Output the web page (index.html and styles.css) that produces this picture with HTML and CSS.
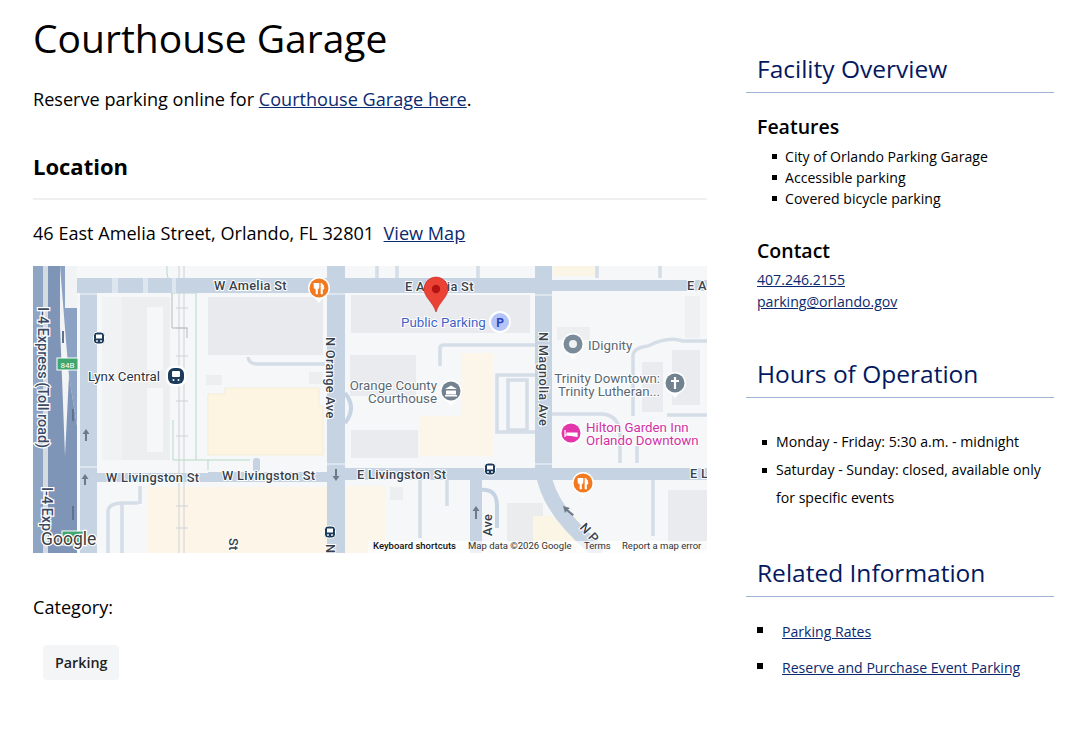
FILE: index.html
```html
<!doctype html>
<html>
<head>
<meta charset="utf-8">
<title>Courthouse Garage</title>
<link rel="stylesheet" href="styles.css">
</head>
<body>
<div class="page">
	<div class="main">
		<h1>Courthouse Garage</h1>
		<p class="intro">Reserve parking online for <a href="#">Courthouse Garage here</a>.</p>
		<h2 class="loc-title">Location</h2>
		<p class="address">46 East Amelia Street, Orlando, FL 32801 &nbsp;<a href="#">View Map</a></p>

		<svg class="map" width="674" height="287" viewBox="0 0 674 287">
			<defs>
				<g id="tip"><path d="M-6 8 L0 15 L6 8 Z" fill="#fff"/></g>
				<g id="transit">
					<rect x="-5.500" y="-6" width="11" height="12" rx="3.500" fill="#1d3c5c" stroke="#fff" stroke-width="1"/>
					<rect x="-3" y="-3.500" width="6" height="4" fill="#fff"/>
					<circle cx="-2" cy="3" r="0.900" fill="#fff"/>
					<circle cx="2" cy="3" r="0.900" fill="#fff"/>
				</g>
				<g id="food">
					<use href="#tip"/>
					<circle r="11" fill="#fff"/>
					<circle r="9.500" fill="#f1791f"/>
					<path d="M-5 -5 V-1 Q-5 1 -3 1 V6 H-1.500 V1 Q0 1 0 -1 V-5 M-2.500 -5 V-1 M2 -5 Q5 -4 5 1 H3.500 V6 H2 Z" fill="#fff" stroke="#fff" stroke-width="0.700"/>
				</g>
			</defs>

			<rect width="674" height="287" fill="#f6f7f8"/>

			<!-- blocks -->
			<rect x="69" y="31" width="68" height="163" fill="#eceef0"/>
			<rect x="69" y="31" width="20" height="163" fill="#f1f2f4"/>
			<rect x="114" y="41" width="16" height="63" fill="#f6f7f8"/>
			<rect x="114" y="122" width="16" height="64" fill="#f6f7f8"/>
			<rect x="175" y="31" width="115" height="58" fill="#e8eaed"/>
			<rect x="173" y="109" width="16" height="10" fill="#eceef0"/>
			<rect x="276" y="106" width="14" height="12" fill="#eceef0"/>
			<path d="M175 128 H192 V122 H286 V140 H290 V189 H175 Z" fill="#fdf5e2" stroke="#eee5cf" stroke-width="0.600"/>
			<rect x="114" y="221" width="180" height="66" fill="#fdf6e8"/>
			<rect x="312" y="220" width="40" height="67" fill="#fcf6ea"/>
			<rect x="318" y="29" width="179" height="38" fill="#e8eaed"/>
			<rect x="317" y="89" width="66" height="41" fill="#e9ebee"/>
			<rect x="318" y="164" width="67" height="28" fill="#e9ebee"/>
			<path d="M428 87 H460 V190 H387 V150 H428 Z" fill="#fbf6e9"/>
			<rect x="524" y="61" width="33" height="13" fill="#eceef0"/>
			<rect x="609" y="96" width="21" height="50" fill="#e9ebee"/>
			<rect x="639" y="84" width="28" height="55" fill="#e9ebee"/>
			<rect x="652" y="30" width="15" height="42" fill="#eff0f2"/>
			<rect x="635" y="224" width="39" height="60" fill="#e9ebee"/>
			<rect x="357" y="221" width="13" height="13" fill="#eceef0"/>
			<rect x="474" y="237" width="36" height="47" fill="#eaecee"/>
			<rect x="500" y="250" width="44" height="37" fill="#fbf5e6"/>
			<rect x="520" y="0" width="44" height="10" fill="#fbf5e6"/>

			<!-- minor roads -->
			<g fill="none" stroke="#d5dde7" stroke-width="3.500">
				<path d="M215 91 Q216 98 224 98 H292"/>
				<path d="M407 100 V82 Q407 79 411 79 H502"/>
				<path d="M502 109 H464 V166 H502"/>
				<path d="M475 114 H494 V164 H475 Z"/>
				<path d="M519 148 H570 Q587 150 587 170 V197"/>
				<path d="M604 180 V197 M634 149 H674 M620 214 V270"/>
				<path d="M600 150 V90 Q600 82 615 80 Q635 70 650 75 H674"/>
				<path d="M75 287 V245 Q76 237 90 237 H105 M89 237 V287 M107 220 V238"/>
				<path d="M387 214 V272 M414 214 V240"/>
				<path d="M344 12 V0 M364 12 V0 M445 12 V0 M564 12 V0 M627 12 V0"/>
			</g>

			<!-- rail and green path -->
			<g fill="none" stroke="#cdd2d8" stroke-width="1">
				<path d="M146 0 V287 M151 0 V287"/>
				<path d="M143 42 H155 M143 62 H155 M143 90 H155 M143 135 H155 M143 170 H155 M143 240 H155 M143 262 H155"/>
			</g>
			<g fill="none" stroke="#b5d9c8" stroke-width="1">
				<path d="M134 0 V8 L139 27 H163 V194 H217 M140 154 V194 H163 M175 194 V204"/>
			</g>
			<path d="M139 27 V62 H154 V72" fill="none" stroke="#b3bdb9" stroke-width="1"/>

			<!-- main roads -->
			<g fill="#c6d3e3">
				<rect x="32" y="12" width="487" height="15"/>
				<rect x="519" y="14" width="155" height="11"/>
				<rect x="294" y="0" width="18" height="287"/>
				<rect x="502" y="0" width="17" height="205"/>
				<rect x="47" y="12" width="17" height="275"/>
				<rect x="47" y="207" width="253" height="9"/>
				<rect x="175" y="206" width="125" height="8"/>
				<rect x="300" y="202" width="374" height="12"/>
				<rect x="220" y="192" width="7" height="14" rx="3"/>
				<path d="M312 127 Q324 142 312 157" fill="none" stroke="#c6d3e3" stroke-width="4"/>
				<path d="M510 205 Q515 245 568 287" fill="none" stroke="#c6d3e3" stroke-width="15"/>
				<rect x="437" y="214" width="12" height="73"/>
				<path d="M447 224 Q464 222 464 240 V262" fill="none" stroke="#c6d3e3" stroke-width="4"/>
			</g>
			<g fill="#dde5ee">
				<rect x="47" y="27" width="17" height="2"/>
				<rect x="294" y="27" width="18" height="2"/>
				<rect x="502" y="28" width="17" height="2"/>
				<rect x="294" y="197" width="18" height="2"/>
				<rect x="502" y="197" width="17" height="2"/>
				<rect x="47" y="200" width="17" height="2"/>
				<rect x="110" y="12" width="5" height="15"/>
				<rect x="79" y="12" width="6" height="15"/>
				<rect x="139" y="12" width="4" height="15"/>
			</g>

			<!-- highway -->
			<rect x="0" y="0" width="44" height="287" fill="#f1f3f5"/>
			<rect x="0" y="0" width="10" height="287" fill="#8fa5c4"/>
			<rect x="10" y="0" width="5" height="287" fill="#d6dbe1"/>
			<path d="M15 0 H27 V60 L32 190 V287 H15 Z" fill="#7e95b8"/>
			<path d="M27 0 H32 V42 H44 V160 L36 110 L33 75 Z" fill="#8ca2c4"/>
			<path d="M36 110 L44 160 V287 H32 V190 Z" fill="#7e95b8"/>
			<path d="M30 65 v12 M40 143 v12 M40 240 v14" stroke="#5e7391" stroke-width="2"/>

			<!-- shields -->
			<rect x="24" y="92" width="21" height="12" fill="#3fa66e" stroke="#fff" stroke-width="1"/>
			<text class="shield" x="34.500" y="101.500">84B</text>
			<rect x="29" y="265" width="22" height="14" fill="#3fa66e" stroke="#fff" stroke-width="1"/>

			<!-- direction arrows -->
			<g fill="#6d7a88">
				<path d="M53 163 l-3.500 5 h2.500 v7 h2 v-7 h2.500 z"/>
				<path d="M52 208 l-3.500 5 h2.500 v6 h2 v-6 h2.500 z"/>
				<path d="M303 215 l3.500 -5 h-2.500 v-7 h-2 v7 h-2.500 z"/>
				<path d="M447 240 l-3.500 5 h2.500 v8 h2 v-8 h2.500 z" transform="translate(-4 0)"/>
				<path d="M530 240 l2 7 l1.500 -2 l6 5 l1.500 -1.500 l-6 -5 l2 -1.500 z"/>
			</g>

			<!-- transit stops -->
			<use href="#transit" x="66" y="72"/>
			<use href="#transit" x="297" y="266"/>
			<use href="#transit" x="457" y="203"/>
			<rect x="133" y="100" width="20" height="20" rx="7" fill="#fff"/>
			<rect x="135" y="102" width="16" height="16" rx="6" fill="#1d3c5c"/>
			<rect x="139" y="105" width="8" height="6" rx="1" fill="#fff"/>
			<circle cx="140.500" cy="114" r="1" fill="#fff"/>
			<circle cx="145.500" cy="114" r="1" fill="#fff"/>

			<!-- place pins -->
			<use href="#food" x="286" y="22"/>
			<use href="#food" x="550" y="217"/>

			<circle cx="467" cy="56" r="11" fill="#fff"/>
			<circle cx="467" cy="56" r="9" fill="#b6c5f8"/>
			<text class="pin-p" x="467" y="60.500">P</text>

			<use href="#tip" x="540" y="78"/>
			<circle cx="540" cy="78" r="11" fill="#fff"/>
			<circle cx="540" cy="78" r="9.500" fill="#7b8b99"/>
			<circle cx="540" cy="78" r="4" fill="#eef1f3"/>

			<use href="#tip" x="642" y="117"/>
			<circle cx="642" cy="117" r="11" fill="#fff"/>
			<circle cx="642" cy="117" r="9.500" fill="#72838f"/>
			<path d="M642 111 v12 M638 115 h8" stroke="#fff" stroke-width="2.200"/>

			<use href="#tip" x="418" y="125"/>
			<circle cx="418" cy="125" r="11" fill="#fff"/>
			<circle cx="418" cy="125" r="9.500" fill="#72838f"/>
			<path d="M412 123 L418 119.500 L424 123 Z M413 124.500 h10 v4 h-10 z M412 129 h12 v1.500 h-12 z" fill="#fff"/>

			<use href="#tip" x="538" y="167"/>
			<circle cx="538" cy="167" r="11" fill="#fff"/>
			<circle cx="538" cy="167" r="9.500" fill="#e535ab"/>
			<path d="M532 164 v7 M532 169 h12 v2 M534 167 h10 v2 h-10 z" stroke="#fff" stroke-width="1.200" fill="#fff"/>

			<!-- labels -->
			<text class="street" x="181" y="24">W Amelia St</text>
			<text class="street" x="372" y="25">E Amelia St</text>
			<text class="street" x="654" y="24">E A</text>
			<text class="street" x="73" y="216">W Livingston St</text>
			<text class="street" x="189" y="214">W Livingston St</text>
			<text class="street" x="324" y="213">E Livingston St</text>
			<text class="street" x="657" y="212">E L</text>
			<text class="street" transform="translate(293 71) rotate(90)">N Orange Ave</text>
			<text class="street" transform="translate(506 66) rotate(90)">N Magnolia Ave</text>
			<text class="highway" transform="translate(5 41) rotate(90)">I-4 Express (Toll road)</text>
			<text class="highway" transform="translate(9 221) rotate(90)">I-4 Exp</text>
			<text class="street" transform="translate(196 272) rotate(90)">St</text>
			<text class="street" transform="translate(293 278) rotate(90)">N</text>
			<text class="street" transform="translate(459 270) rotate(-90)">Ave</text>
			<text class="street" transform="translate(546 262) rotate(48)">N P</text>

			<text class="poi poi-blue" x="368" y="61">Public Parking</text>
			<text class="poi poi-grey" x="555" y="84">IDignity</text>
			<text class="poi poi-grey poi-end" x="627" y="117">Trinity Downtown:</text>
			<text class="poi poi-grey poi-end" x="627" y="130">Trinity Lutheran...</text>
			<text class="poi poi-grey poi-end" x="404" y="124">Orange County</text>
			<text class="poi poi-grey poi-end" x="404" y="137">Courthouse</text>
			<text class="poi poi-pink" x="553" y="166">Hilton Garden Inn</text>
			<text class="poi poi-pink" x="553" y="179">Orlando Downtown</text>
			<text class="poi poi-dark" x="55" y="115">Lynx Central</text>

			<!-- main marker -->
			<path d="M403 46 C400 36 391 31 391 23 A12 12 0 0 1 415 23 C415 31 406 36 403 46 Z" fill="#ea4335" stroke="#c5221f" stroke-width="0.600"/>
			<circle cx="403" cy="23" r="4.200" fill="#b31412"/>

			<!-- footer of the map -->
			<text class="g-logo" x="8" y="279">Google</text>
			<rect x="335" y="275" width="339" height="12" fill="#fff" opacity="0.700"/>
			<text class="attr attr-bold" x="340" y="283">Keyboard shortcuts</text>
			<text class="attr" x="435" y="283">Map data ©2026 Google</text>
			<text class="attr" x="551" y="283">Terms</text>
			<text class="attr" x="589" y="283">Report a map error</text>
		</svg>

		<p class="cat-label">Category:</p>
		<a class="tag" href="#">Parking</a>
	</div>

	<div class="side">
		<h2 class="side-title">Facility Overview</h2>
		<h3 class="first">Features</h3>
		<ul class="features">
			<li>City of Orlando Parking Garage</li>
			<li>Accessible parking</li>
			<li>Covered bicycle parking</li>
		</ul>
		<h3 class="contact-title">Contact</h3>
		<div class="contact">
			<a href="#">407.246.2155</a><br>
			<a href="#">parking@orlando.gov</a>
		</div>

		<h2 class="side-title hours-title">Hours of Operation</h2>
		<ul class="hours">
			<li>Monday - Friday: 5:30 a.m. - midnight</li>
			<li>Saturday - Sunday: closed, available only for specific events</li>
		</ul>

		<h2 class="side-title related-title">Related Information</h2>
		<ul class="related">
			<li><a href="#">Parking Rates</a></li>
			<li><a href="#">Reserve and Purchase Event Parking</a></li>
		</ul>
	</div>
</div>
</body>
</html>
```

FILE: styles.css
```css
* { padding: 0; margin: 0; box-sizing: border-box; }
body { background: #fff; color: #000; font-family: "Open Sans", "Liberation Sans", sans-serif; font-size: 18.100px; }
a { color: #0b2a6f; }
ul { list-style: none; }

.page { display: flex; padding: 14px 30px 0 33px; gap: 39px; }
.main { width: 674px; flex: none; }
.side { width: 308px; flex: none; padding-top: 38px; }

h1 { font-size: 39px; font-weight: 400; line-height: 48px; }
.intro { margin-top: 25px; line-height: 24px; }
.loc-title { margin-top: 40px; font-size: 22px; font-weight: 700; line-height: 30px; padding-bottom: 17px; border-bottom: 2px solid #f0f0f0; }
.address { margin-top: 21px; line-height: 24px; }
.map { display: block; margin-top: 21px; }
.cat-label { margin-top: 42px; line-height: 24px; }
.tag { display: inline-block; margin: 26px 0 0 10px; padding: 0 12px; height: 35px; line-height: 35px; background: #f3f5f7; border-radius: 4px; font-size: 14.300px; font-weight: 600; color: #222; text-decoration: none; }

/* map labels */
.map text { font-family: Roboto, "Liberation Sans", sans-serif; }
.street { font-size: 12.800px; font-weight: 500; letter-spacing: 0.3px; fill: #37424d; paint-order: stroke; stroke: #fff; stroke-width: 2px; }
.highway { font-size: 14.400px; font-weight: 500; fill: #3a4a64; paint-order: stroke; stroke: #fff; stroke-width: 2.500px; }
.shield { font-size: 8px; fill: #fff; text-anchor: middle; }
.poi { font-size: 13.300px; paint-order: stroke; stroke: #fff; stroke-width: 2px; }
.poi-end { text-anchor: end; }
.poi-blue { fill: #3f63c4; }
.poi-grey { fill: #5a6873; }
.poi-pink { fill: #d12fa6; }
.poi-dark { fill: #28333f; }
.pin-p { font-size: 12px; font-weight: 700; fill: #2b44c0; text-anchor: middle; }
.g-logo { font-size: 17.500px; font-weight: 400; fill: #3c4043; paint-order: stroke; stroke: #fff; stroke-width: 2.500px; }
.attr { font-size: 9.500px; fill: #333; }
.attr-bold { font-weight: 500; font-size: 9.500px; fill: #111; }

/* sidebar */
.side-title { font-size: 24.500px; font-weight: 400; line-height: 34px; color: #03195f; padding: 0 0 6px 11px; border-bottom: 1px solid #9fb4d4; }
h3 { font-size: 19.500px; font-weight: 600; line-height: 26px; padding-left: 11px; }
h3.first { margin-top: 21px; }
.features { margin-top: 6px; padding-left: 26px; font-size: 14.100px; line-height: 21px; }
.features li, .hours li { display: flex; }
.features li::before, .hours li::before { content: ""; flex: none; width: 5px; height: 5px; background: #000; }
.features li::before { margin: 8px 8px 0 0; }
.hours li::before { margin: 12px 9px 0 0; }
.contact-title { margin-top: 29px; }
.contact { margin-top: 5px; padding-left: 11px; font-size: 14.100px; line-height: 22px; }
.hours-title { margin-top: 44px; }
.hours { margin-top: 30px; padding-left: 16px; font-size: 14.100px; line-height: 28px; }
.related-title { margin-top: 44px; }
.related { margin-top: 16px; font-size: 14.100px; }
.related li { display: flex; align-items: center; gap: 19px; padding-left: 11px; height: 36px; }
.related li::before { content: ""; width: 6px; height: 6px; background: #000; margin-top: -3px; }
```
